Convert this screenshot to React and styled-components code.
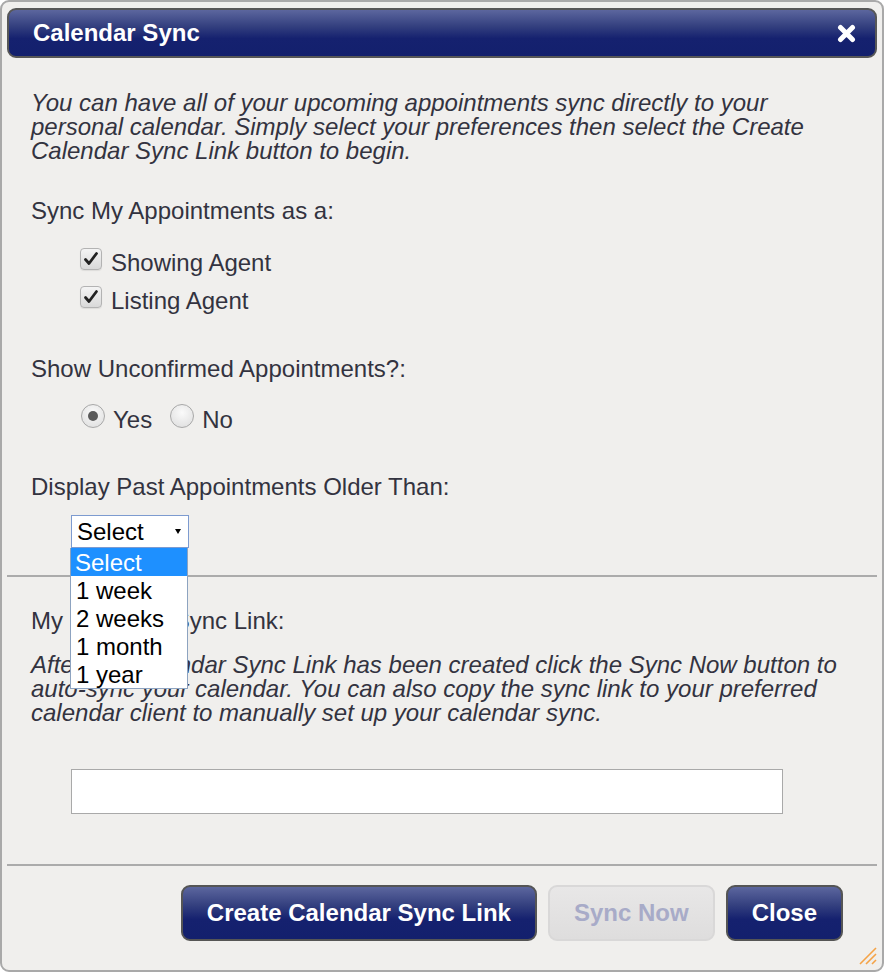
import React from "react";
import styled, { createGlobalStyle } from "styled-components";

const Global = createGlobalStyle`
  html, body { margin: 0; padding: 0; background: #ffffff; }
  body { font-family: "Liberation Sans", Arial, sans-serif; }
  * { box-sizing: border-box; }
`;

const Dialog = styled.div`
  position: relative;
  width: 884px;
  height: 972px;
  border: 2px solid #a9a9a9;
  border-radius: 9px;
  background: #f0efed;
  padding: 6px 5px 0;
  display: flex;
  flex-direction: column;
  color: #333340;
  font-family: "Liberation Sans", Arial, sans-serif;
`;

const Header = styled.div`
  height: 50px;
  border: 2px solid #575757;
  border-radius: 9px;
  background: linear-gradient(to bottom, #5c669e 0%, #34407f 35%, #15216f 62%, #13206d 100%);
  display: flex;
  align-items: center;
  justify-content: space-between;
  padding: 0 19px 0 24px;
`;

const Title = styled.h1`
  margin: 0;
  font-size: 24px;
  font-weight: bold;
  color: #ffffff;
  line-height: 24px;
`;

const CloseX = styled.button`
  border: 0;
  padding: 0;
  background: none;
  width: 20px;
  height: 20px;
  display: flex;
  align-items: center;
  justify-content: center;
  cursor: pointer;
`;

const Section = styled.div`
  position: relative;
  padding: 0 24px;
  display: flex;
  flex-direction: column;
`;

const Intro = styled.p`
  margin: ${(p) => p.$mt}px 0 0;
  font-size: 24px;
  line-height: 24px;
  font-style: italic;
`;

const Label = styled.div`
  margin-top: ${(p) => p.$mt}px;
  font-size: 24px;
  line-height: 24px;
`;

const OptionList = styled.div`
  margin-top: ${(p) => p.$mt}px;
  padding-left: ${(p) => p.$indent}px;
  display: flex;
  flex-direction: ${(p) => (p.$row ? "row" : "column")};
  gap: ${(p) => (p.$row ? "18px" : "0")};
`;

const OptionRow = styled.label`
  height: 38px;
  display: flex;
  align-items: center;
  gap: ${(p) => (p.$radio ? 8 : 9)}px;
  font-size: 24px;
  line-height: 24px;
  padding-top: ${(p) => (p.$radio ? 4 : 0)}px;
`;

const CheckBox = styled.span`
  width: 22px;
  height: 22px;
  margin-top: -8px;
  border: 1px solid #b3b3b3;
  border-radius: 4px;
  background: linear-gradient(to bottom, #f4f4f4, #d9d9d9);
  box-shadow: 0 1px 1px rgba(0, 0, 0, 0.08);
  display: flex;
  align-items: center;
  justify-content: center;
  flex: none;
`;

const Radio = styled.span`
  width: 24px;
  height: 24px;
  margin-top: -8px;
  border: 1px solid #a8a8a8;
  border-radius: 50%;
  background: radial-gradient(circle at 50% 35%, #fafafa, #dcdcdc);
  display: flex;
  align-items: center;
  justify-content: center;
  flex: none;
  &::after {
    content: "";
    width: 10px;
    height: 10px;
    border-radius: 50%;
    background: ${(p) => (p.$on ? "#5a5a5a" : "transparent")};
  }
`;

const SelectWrap = styled.div`
  position: relative;
  margin: 16px 0 0 40px;
  width: 118px;
  height: 33px;
`;

const SelectBox = styled.div`
  width: 118px;
  height: 33px;
  border: 1px solid #7d9bd0;
  background: #ffffff;
  display: flex;
  align-items: center;
  justify-content: space-between;
  padding: 0 7px 0 5px;
  font-size: 24px;
  color: #000;
`;

const Caret = styled.span`
  width: 0;
  height: 0;
  border-left: 3px solid transparent;
  border-right: 3px solid transparent;
  border-top: 5px solid #000;
`;

const Menu = styled.ul`
  position: absolute;
  top: 33px;
  left: -1px;
  width: 118px;
  margin: 0;
  padding: 0;
  list-style: none;
  background: #ffffff;
  border: 1px solid #8da3c0;
  border-top: 0;
  z-index: 5;
`;

const MenuItem = styled.li`
  height: 28px;
  line-height: 30px;
  padding-left: ${(p) => (p.$active ? 4 : 5)}px;
  font-size: 24px;
  color: ${(p) => (p.$active ? "#ffffff" : "#000000")};
  background: ${(p) => (p.$active ? "#1e90ff" : "transparent")};
`;

const Divider = styled.hr`
  margin: ${(p) => p.$mt}px 0 0;
  border: 0;
  height: 2px;
  background: #ababab;
`;

const LinkInput = styled.input`
  margin: 44px 0 0 40px;
  width: 712px;
  height: 45px;
  border: 1px solid #a9a9a9;
  background: #ffffff;
  font-size: 20px;
  padding: 0 6px;
`;

const Footer = styled.div`
  margin-top: 19px;
  padding-right: 34px;
  display: flex;
  justify-content: flex-end;
  gap: 11px;
`;

const Button = styled.button`
  height: 56px;
  padding: 0 24px;
  border-radius: 9px;
  font-family: "Liberation Sans", Arial, sans-serif;
  font-size: 24px;
  font-weight: bold;
  border: 2px solid ${(p) => (p.$disabled ? "#d9d8d8" : "#555555")};
  color: ${(p) => (p.$disabled ? "#a8abc8" : "#ffffff")};
  background: ${(p) =>
    p.$disabled
      ? "linear-gradient(to bottom, #e8e7e7, #dedddd)"
      : "linear-gradient(to bottom, #5c669e 0%, #34407f 35%, #15216f 62%, #13206d 100%)"};
  cursor: ${(p) => (p.$disabled ? "default" : "pointer")};
`;

const Grip = styled.svg`
  position: absolute;
  right: 4px;
  bottom: 4px;
`;

function Check() {
  return (
    <svg width="16" height="16" viewBox="0 0 16 16">
      <path d="M2.5 8.5 L6 12.5 L13.5 2.5" fill="none" stroke="#222" strokeWidth="2.8" strokeLinecap="round" strokeLinejoin="round" />
    </svg>
  );
}

export default function App() {
  return (
    <>
      <Global />
      <Dialog>
        <Header>
          <Title>Calendar Sync</Title>
          <CloseX aria-label="Close">
            <svg width="19" height="19" viewBox="0 0 19 19">
              <path d="M3.5 3.5 L15.5 15.5 M15.5 3.5 L3.5 15.5" stroke="#ffffff" strokeWidth="5" strokeLinecap="round" />
            </svg>
          </CloseX>
        </Header>

        <Section>
          <Intro $mt={33}>
            You can have all of your upcoming appointments sync directly to your personal calendar. Simply select your preferences then select the Create Calendar Sync Link button to begin.
          </Intro>
          <Label $mt={36}>Sync My Appointments as a:</Label>
          <OptionList $mt={21} $indent={49}>
            <OptionRow>
              <CheckBox><Check /></CheckBox>
              Showing Agent
            </OptionRow>
            <OptionRow>
              <CheckBox><Check /></CheckBox>
              Listing Agent
            </OptionRow>
          </OptionList>
          <Label $mt={37}>Show Unconfirmed Appointments?:</Label>
          <OptionList $mt={18} $indent={50} $row>
            <OptionRow $radio>
              <Radio $on />
              Yes
            </OptionRow>
            <OptionRow $radio>
              <Radio />
              No
            </OptionRow>
          </OptionList>
          <Label $mt={38}>Display Past Appointments Older Than:</Label>
          <SelectWrap>
            <SelectBox>
              Select
              <Caret />
            </SelectBox>
            <Menu>
              <MenuItem $active>Select</MenuItem>
              <MenuItem>1 week</MenuItem>
              <MenuItem>2 weeks</MenuItem>
              <MenuItem>1 month</MenuItem>
              <MenuItem>1 year</MenuItem>
            </Menu>
          </SelectWrap>
        </Section>

        <Divider $mt={27} />

        <Section>
          <Label $mt={32}>My Calendar Sync Link:</Label>
          <Intro $mt={20}>
            After the Calendar Sync Link has been created click the Sync Now button to auto-sync your calendar. You can also copy the sync link to your preferred calendar client to manually set up your calendar sync.
          </Intro>
          <LinkInput type="text" readOnly value="" />
        </Section>

        <Divider $mt={50} />

        <Footer>
          <Button>Create Calendar Sync Link</Button>
          <Button $disabled>Sync Now</Button>
          <Button>Close</Button>
        </Footer>

        <Grip width="24" height="24" viewBox="0 0 24 24">
          <path d="M22 6 L6 22 M22 12 L12 22 M22 18 L18 22" stroke="#f5a347" strokeWidth="1.6" />
        </Grip>
      </Dialog>
    </>
  );
}
